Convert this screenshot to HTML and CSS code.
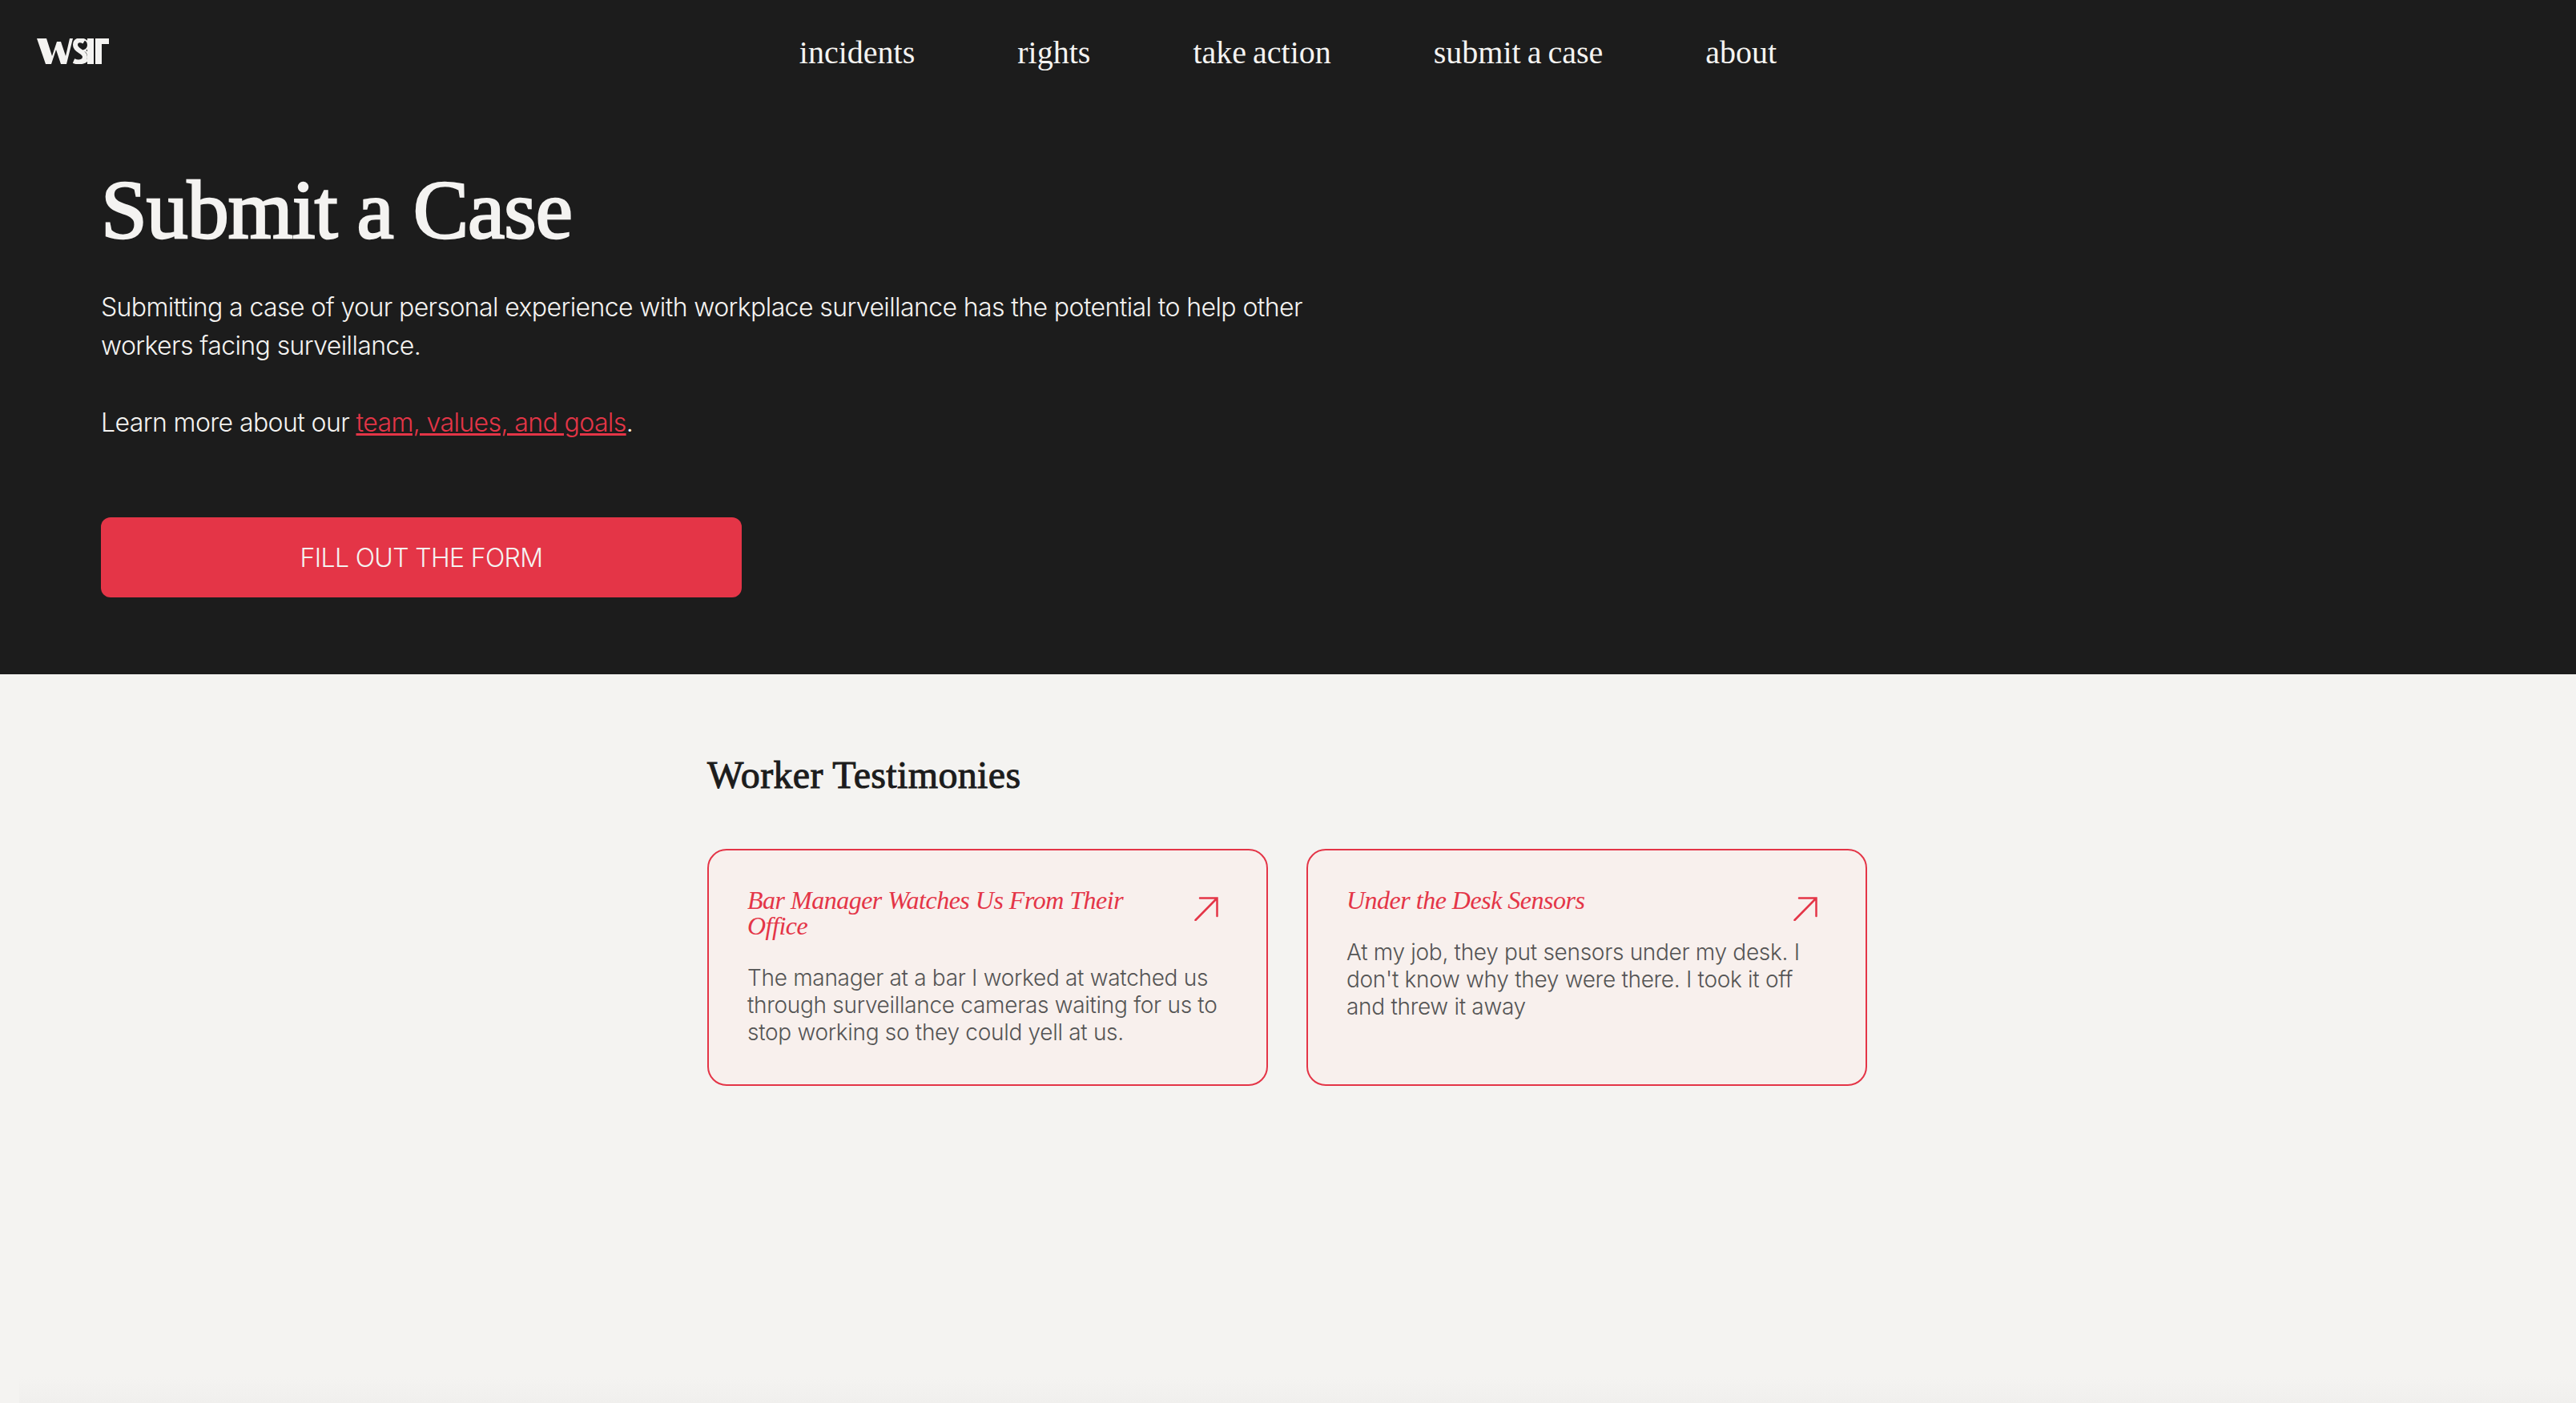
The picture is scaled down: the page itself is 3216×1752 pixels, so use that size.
FILE: index.html
```html
<!DOCTYPE html>
<html lang="en">
<head>
<meta charset="utf-8">
<title>Submit a Case</title>
<link rel="stylesheet" href="styles.css">
</head>
<body>
<div class="page">
  <header class="hero">
    <div class="topbar">
      <a class="logo" href="#" aria-label="WSIT">
        <svg width="90" height="32" viewBox="0 0 90 32">
          <path fill="#f4f3f1" d="M0 0h12l7 22 6-18h5l6 18 5-22h4l-8 32h-7l-6-18-6 18h-7z"/>
          <path fill="none" stroke="#f4f3f1" stroke-width="6" d="M59 4c-5-3-11-2-11 4 0 8 12 8 12 15 0 6-7 8-14 5"/>
          <path fill="none" stroke="#f4f3f1" stroke-width="2" d="M52 1c8-1 12 2 12 7 0 4-2 6-5 7 4 1 5 4 5 8 0 5-4 8-11 8"/>
          <path fill="#f4f3f1" d="M63 0h8v32h-8z"/>
          <path fill="#f4f3f1" d="M73 0h17v7h-9v25h-8z"/>
        </svg>
      </a>
      <nav class="nav">
        <a href="#">incidents</a>
        <a href="#">rights</a>
        <a href="#">take action</a>
        <a href="#">submit a case</a>
        <a href="#">about</a>
      </nav>
    </div>
    <div class="intro">
      <h1>Submit a Case</h1>
      <p>Submitting a case of your personal experience with workplace surveillance has the potential to help other workers facing surveillance.</p>
      <p>Learn more about our <a href="#">team, values, and goals</a>.</p>
      <a class="cta" href="#">FILL OUT THE FORM</a>
    </div>
  </header>
  <main class="content">
    <h2>Worker Testimonies</h2>
    <div class="cards">
      <article class="card">
        <div class="card-head">
          <h3>Bar Manager Watches Us From Their Office</h3>
          <svg class="arrow" width="30" height="30" viewBox="0 0 30 30"><path d="M1.5 29 28.5 1.5M7 1.5h21.500v22.500" fill="none" stroke="#e43547" stroke-width="2.500" stroke-linecap="round"/></svg>
        </div>
        <p>The manager at a bar I worked at watched us through surveillance cameras waiting for us to stop working so they could yell at us.</p>
      </article>
      <article class="card">
        <div class="card-head">
          <h3>Under the Desk Sensors</h3>
          <svg class="arrow" width="30" height="30" viewBox="0 0 30 30"><path d="M1.5 29 28.5 1.5M7 1.5h21.500v22.500" fill="none" stroke="#e43547" stroke-width="2.500" stroke-linecap="round"/></svg>
        </div>
        <p>At my job, they put sensors under my desk. I don't know why they were there. I took it off and threw it away</p>
      </article>
    </div>
  </main>
  <div class="edge"></div>
</div>
</body>
</html>
```
FILE: styles.css
```css
* { box-sizing: border-box; }
html, body { margin: 0; padding: 0; }
body { background: #f4f3f1; font-family: "Inter", "Liberation Sans", sans-serif; overflow: hidden; }
a { color: inherit; }
.page { height: 1752px; display: flex; flex-direction: column; }
.hero { height: 842px; background: #1c1c1c; color: #f4f3f1; flex: none; }
.topbar { display: grid; grid-template-columns: 1fr auto 1fr; align-items: start; padding: 42px 46px 0; height: 74px; }
.logo { display: block; height: 32px; margin-top: 6px; }
.logo svg { display: block; }
.nav { display: flex; gap: 128px; font-family: "Liberation Serif", serif; font-size: 40px; line-height: 48px; word-spacing: -2px; }
.nav a { text-decoration: none; }
.intro { padding: 128px 126px 0; }
h1 { margin: 0 0 38px; font-family: "Liberation Serif", serif; font-weight: 400; font-size: 104px; line-height: 120px; letter-spacing: -1px; -webkit-text-stroke: 2.5px #f4f3f1; }
.intro p { margin: 0 0 48px; width: 1540px; font-weight: 300; font-size: 32px; line-height: 48px; letter-spacing: -.6px; }
.intro p a { color: #e43547; }
.cta { display: flex; align-items: center; justify-content: center; width: 800px; height: 100px; margin-top: 94px; background: #e43547; border-radius: 12px; color: #f4f3f1; font-size: 32px; font-weight: 300; letter-spacing: -.65px; text-decoration: none; }
.content { flex: 1; width: 1450px; margin-left: 883px; padding-top: 94px; }
h2 { margin: 0 0 60px; font-family: "Liberation Serif", serif; font-weight: 400; font-size: 48px; line-height: 64px; letter-spacing: .35px; color: #1c1c1c; -webkit-text-stroke: 1px #1c1c1c; }
.cards { display: flex; gap: 48px; }
.card { width: 700px; height: 296px; padding: 46px 48px 48px; background: #f8f0ed; border: 2px solid #e43547; border-radius: 24px; }
.card-head { display: flex; justify-content: space-between; align-items: flex-start; gap: 60px; }
h3 { margin: 0 0 32px; font-family: "Liberation Serif", serif; font-style: italic; font-weight: 400; font-size: 32px; line-height: 32px; letter-spacing: -.5px; color: #e43547; }
.arrow { flex: none; margin: 12px 12px 0 0; }
.card p { margin: 0; font-weight: 300; font-size: 28px; line-height: 34px; letter-spacing: -.3px; color: #555; }
.edge { height: 32px; margin-left: 24px; flex: none; background: linear-gradient(#f4f3f1, #f0efed); }
```
